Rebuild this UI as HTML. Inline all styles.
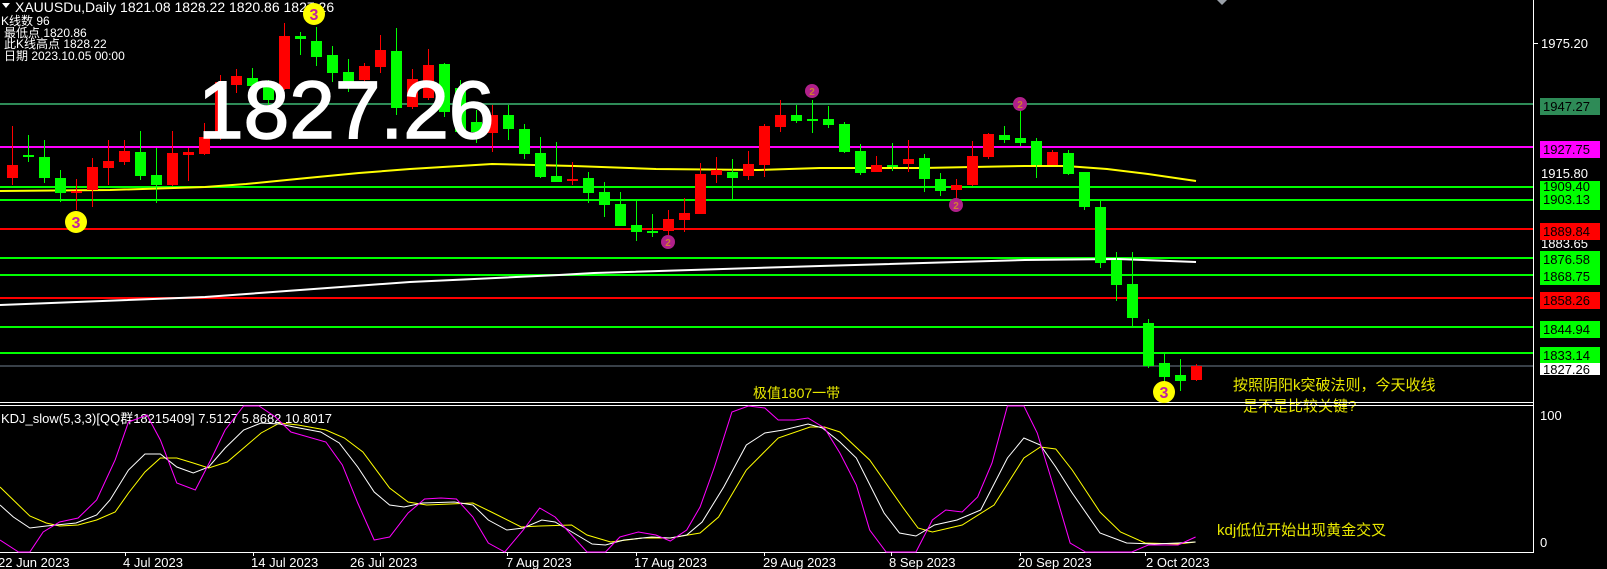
<!DOCTYPE html>
<html><head><meta charset="utf-8"><style>
html,body{margin:0;padding:0;background:#000;width:1607px;height:569px;overflow:hidden}
svg{display:block}
text{font-family:"Liberation Sans","Noto Sans CJK SC",sans-serif}
</style></head><body>
<svg id="s" width="1607" height="569" xmlns="http://www.w3.org/2000/svg">
<rect width="1607" height="569" fill="#000"/>
<g id="hl" stroke-width="2">
<line x1="0" x2="1533" y1="104" y2="104" stroke="#2e8b57"/>
<line x1="0" x2="1533" y1="147" y2="147" stroke="#ff00ff"/>
<line x1="0" x2="1533" y1="187" y2="187" stroke="#00ff00"/>
<line x1="0" x2="1533" y1="200" y2="200" stroke="#00ff00"/>
<line x1="0" x2="1533" y1="229" y2="229" stroke="#ff0000"/>
<line x1="0" x2="1533" y1="258" y2="258" stroke="#00ff00"/>
<line x1="0" x2="1533" y1="275" y2="275" stroke="#00ff00"/>
<line x1="0" x2="1533" y1="298" y2="298" stroke="#ff0000"/>
<line x1="0" x2="1533" y1="327" y2="327" stroke="#00ff00"/>
<line x1="0" x2="1533" y1="353" y2="353" stroke="#00ff00"/>
<line x1="0" x2="1533" y1="366" y2="366" stroke="#708090" stroke-width="1"/>
</g>
<polyline fill="none" stroke="#ffff00" stroke-width="2" points="0,191 110,190 205,187 246,184 307,178 359,173 410,169 492,164 574,166 656,169 758,170 820,168 922,168 1025,166 1066,166 1107,169 1148,174 1196,181"/>
<polyline fill="none" stroke="#ffffff" stroke-width="2" points="0,305 205,297 410,282 559,275 594,273 820,266 1025,260 1117,259 1196,262"/>
<g id="candles"></g>
<polygon points="2,3 10,3 6,8" fill="#fff"/>
<text x="15" y="12" fill="#fff" font-size="14">XAUUSDu,Daily  1821.08 1828.22 1820.86 1827.26</text>
<text x="1" y="25" fill="#fff" font-size="12">K线数   96</text>
<text x="4" y="37" fill="#fff" font-size="12">最低点 1820.86</text>
<text x="4" y="48" fill="#fff" font-size="12">此K线高点 1828.22</text>
<text x="4" y="60" fill="#fff" font-size="12">日期 2023.10.05 00:00</text>
<polygon points="1217,0 1227,0 1222,5" fill="#9aa0a8"/>
<text x="753" y="398" fill="#e8e800" font-size="14">极值1807一带</text>
<text x="1233" y="390" fill="#e8e800" font-size="15">按照阴阳k突破法则，今天收线</text>
<text x="1243" y="411" fill="#e8e800" font-size="15">是不是比较关键?</text>
<text x="1217" y="535" fill="#e8e800" font-size="15">kdj低位开始出现黄金交叉</text>
<line x1="1533.5" x2="1533.5" y1="0" y2="552" stroke="#fff"/>
<line x1="0" x2="1534" y1="402.5" y2="402.5" stroke="#fff"/>
<line x1="0" x2="1534" y1="405.5" y2="405.5" stroke="#fff"/>
<line x1="0" x2="1534" y1="552.5" y2="552.5" stroke="#fff"/>
<g font-size="13">
<line x1="1534" x2="1538" y1="43.5" y2="43.5" stroke="#fff"/>
<text x="1541" y="48" fill="#fff">1975.20</text>
<rect x="1540" y="98" width="60" height="17" fill="#2e8b57"/><text x="1543" y="111" fill="#000">1947.27</text>
<rect x="1540" y="141" width="60" height="17" fill="#ff00ff"/><text x="1543" y="154" fill="#000">1927.75</text>
<text x="1541" y="178" fill="#fff">1915.80</text>
<text x="1541" y="248" fill="#fff">1883.65</text>
<rect x="1540" y="181" width="60" height="29" fill="#00ff00"/><text x="1543" y="191" fill="#000">1909.40</text><text x="1543" y="204" fill="#000">1903.13</text>
<rect x="1540" y="223" width="60" height="17" fill="#ff0000"/><text x="1543" y="236" fill="#000">1889.84</text>
<rect x="1540" y="251" width="60" height="34" fill="#00ff00"/><text x="1543" y="264" fill="#000">1876.58</text><text x="1543" y="281" fill="#000">1868.75</text>
<rect x="1540" y="292" width="60" height="17" fill="#ff0000"/><text x="1543" y="305" fill="#000">1858.26</text>
<rect x="1540" y="321" width="60" height="17" fill="#00ff00"/><text x="1543" y="334" fill="#000">1844.94</text>
<rect x="1540" y="363" width="60" height="12" fill="#fff"/><text x="1543" y="374" fill="#000">1827.26</text>
<rect x="1540" y="347" width="60" height="16" fill="#00ff00"/><text x="1543" y="360" fill="#000">1833.14</text>
<text x="1540" y="420" fill="#fff">100</text>
<text x="1540" y="547" fill="#fff">0</text>
</g>
<text x="1" y="423" fill="#fff" font-size="13">KDJ_slow(5,3,3)[QQ群18215409] 7.5127 5.8682 10.8017</text>
<g transform="scale(1.028,1)">
<polyline fill="none" stroke="#ffff00" stroke-width="1" points="0,487 13,500 29,516 45,523 58,526 76,525 94,520 112,512 125,493 141,472 156,458 172,458 188,463 203,468 221,462 237,448 254,433 272,423 290,425 317,430 335,438 353,452 379,488 397,502 415,505 460,503 478,512 507,527 525,526 556,525 571,535 594,542 625,538 652,538 681,533 699,517 726,470 757,438 788,427 802,427 817,432 846,460 878,507 893,528 907,532 936,525 967,505 996,458 1012,447 1027,449 1043,470 1070,512 1090,532 1114,543 1146,544 1163,542"/>
<polyline fill="none" stroke="#ffffff" stroke-width="1" points="0,505 13,517 29,528 45,526 74,523 94,515 107,500 125,470 141,454 156,454 172,467 188,473 203,467 219,448 237,430 254,423 272,424 286,427 312,432 330,443 348,467 364,492 379,505 393,507 411,503 442,502 460,505 475,520 493,530 509,528 527,520 540,522 558,533 576,544 589,545 607,540 634,537 652,538 668,535 683,522 704,487 726,445 744,433 762,430 786,424 800,428 817,442 833,458 860,513 875,533 891,536 909,525 931,520 954,510 980,458 996,438 1012,445 1027,467 1043,493 1070,533 1096,543 1123,544 1146,543 1163,542"/>
<polyline fill="none" stroke="#ff00ff" stroke-width="1" points="0,540 18,552 29,552 42,532 58,522 76,518 94,500 112,460 125,422 143,415 156,440 172,483 190,490 205,460 219,430 237,406 252,406 268,417 283,432 317,442 333,465 348,503 364,540 379,537 397,513 413,499 429,498 444,499 460,517 475,543 491,552 509,530 525,508 540,517 556,535 571,552 589,552 603,537 621,532 638,535 652,541 668,530 681,507 695,467 712,412 728,406 744,408 757,420 773,420 786,418 802,428 817,453 833,485 846,530 862,552 891,552 907,520 920,510 936,512 951,497 965,463 980,406 996,406 1009,433 1025,487 1041,543 1056,552 1101,552 1117,545 1146,545 1163,537"/>
</g>
<g stroke="#fff">
<line x1="125.5" x2="125.5" y1="552" y2="556"/><line x1="253.5" x2="253.5" y1="552" y2="556"/><line x1="380.5" x2="380.5" y1="552" y2="556"/><line x1="507.5" x2="507.5" y1="552" y2="556"/><line x1="636.5" x2="636.5" y1="552" y2="556"/><line x1="764.5" x2="764.5" y1="552" y2="556"/><line x1="891.5" x2="891.5" y1="552" y2="556"/><line x1="1020.5" x2="1020.5" y1="552" y2="556"/><line x1="1145.5" x2="1145.5" y1="552" y2="556"/>
</g>
<g fill="#fff" font-size="13">
<text x="-2" y="567">22 Jun 2023</text>
<text x="123" y="567">4 Jul 2023</text>
<text x="251" y="567">14 Jul 2023</text>
<text x="350" y="567">26 Jul 2023</text>
<text x="506" y="567">7 Aug 2023</text>
<text x="634" y="567">17 Aug 2023</text>
<text x="763" y="567">29 Aug 2023</text>
<text x="889" y="567">8 Sep 2023</text>
<text x="1018" y="567">20 Sep 2023</text>
<text x="1146" y="567">2 Oct 2023</text>
</g>
<g font-family="Liberation Sans" font-weight="bold" text-anchor="middle">
<circle cx="76" cy="222" r="11" fill="#ffff00"/><text x="76" y="228" fill="#c020a0" font-size="16">3</text>
<circle cx="314" cy="14" r="11" fill="#ffff00"/><text x="314" y="20" fill="#c020a0" font-size="16">3</text>
<circle cx="1164" cy="392" r="11" fill="#ffff00"/><text x="1164" y="398" fill="#c020a0" font-size="16">3</text>
<circle cx="812" cy="91" r="7" fill="#b0208a"/><text x="812" y="95" fill="#d08030" font-size="10">2</text>
<circle cx="1020" cy="104" r="7" fill="#b0208a"/><text x="1020" y="108" fill="#d08030" font-size="10">2</text>
<circle cx="668" cy="242" r="7" fill="#b0208a"/><text x="668" y="246" fill="#d08030" font-size="10">2</text>
<circle cx="956" cy="205" r="7" fill="#b0208a"/><text x="956" y="209" fill="#d08030" font-size="10">2</text>
</g>
<text id="big" x="198" y="138" fill="#fff" font-size="82" font-family="Liberation Sans" stroke="#fff" stroke-width="1.5">1827.26</text>
</svg>
<script>
var D=[["r",165,178,126,185],["g",155,157,135,162],["g",157,178,140,183],["g",178,193,170,202],["r",191,192,179,210],["r",167,190,158,207],["r",161,168,140,185],["r",151,162,140,165],["g",152,176,131,180],["g",175,185,148,203],["r",153,185,131,186],["r",152,155,148,181],["r",137,154,123,155],["r",82,137,75,140],["r",76,85,69,93],["g",78,86,68,95],["g",85,100,80,105],["r",36,89,23,90],["g",36,39,32,55],["g",41,57,27,66],["g",55,73,46,82],["g",72,88,59,92],["r",66,80,63,82],["r",50,67,35,73],["g",51,108,28,115],["r",79,107,69,109],["r",65,98,49,100],["g",64,112,63,117],["g",88,132,80,135],["g",122,132,110,143],["r",115,133,105,152],
["g",115,129,105,140],["g",129,154,124,159],["g",153,177,137,178],["g",176,182,142,182],["r",179,181,162,185],["g",178,193,172,203],["g",192,205,182,217],["g",204,226,192,226],["g",225,232,201,241],["g",231,233,214,237],["r",219,231,210,235],["r",213,220,198,232],["r",174,214,163,214],["r",170,175,157,183],["g",172,178,159,199],["r",164,176,151,180],["r",126,165,124,177],["r",115,127,100,132],["g",115,121,105,123],["g",119,121,100,133],["g",119,125,106,128],["g",124,152,122,153],["g",151,173,144,175],["r",165,172,156,172],["g",165,166,143,171],["r",159,164,140,172],["g",158,179,154,192],["g",179,191,173,196],["r",185,190,179,199],["r",156,185,141,186],["r",134,157,133,159],["g",135,140,126,143],["g",138,143,111,146],["g",141,165,138,178],["r",152,165,150,165],["g",153,174,150,175],["g",172,207,172,210],["g",207,263,200,268],["g",260,285,252,301],["g",284,318,252,326],["g",323,366,319,368],["g",363,377,354,383],["g",375,381,359,391],["r",366,380,364,381]];
var g=document.getElementById("candles"),h="";
D.forEach(function(d,i){var x=12+16*i,c=d[0]=="g"?"#00ff00":"#ff0000";
h+='<rect x="'+x+'" y="'+d[3]+'" width="1" height="'+(d[4]-d[3])+'" fill="'+c+'"/>';
h+='<rect x="'+(x-5)+'" y="'+d[1]+'" width="11" height="'+Math.max(2,d[2]-d[1])+'" fill="'+c+'"/>';});
g.innerHTML=h;
</script>
</body></html>
